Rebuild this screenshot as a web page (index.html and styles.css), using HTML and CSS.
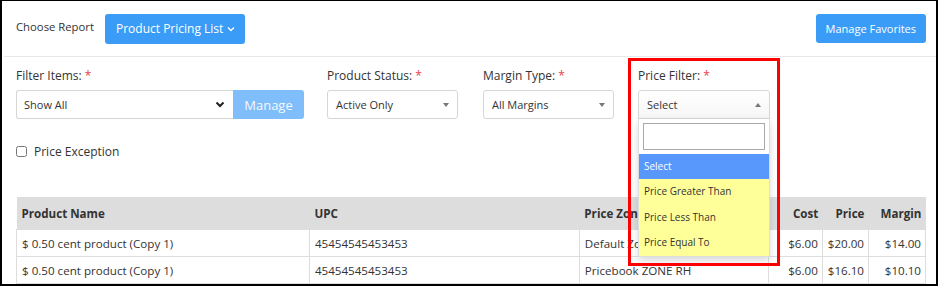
FILE: index.html
```html
<!DOCTYPE html>
<html lang="en">
<head>
    <meta charset="UTF-8">
    <title>Product Pricing List</title>
    <link rel="stylesheet" href="styles.css">
</head>
<body>

<div class="page">
    <div class="report-bar">
        <div class="report-left">
            <span class="choose-label">Choose Report</span>
            <button class="btn-blue report-btn">Product Pricing List
                <svg width="8" height="6" viewBox="0 0 8 6"><path d="M1 1.5 L4 4.5 L7 1.5" fill="none" stroke="#fff" stroke-width="1.3"/></svg>
            </button>
        </div>
        <button class="btn-blue fav-btn">Manage Favorites</button>
    </div>

    <div class="filters">
        <div class="filter filter-items">
            <label>Filter Items: <span class="req">*</span></label>
            <div class="input-group">
                <div class="native-select">
                    <span>Show All</span>
                    <svg width="10" height="7" viewBox="0 0 10 7"><path d="M1.5 1.5 L5 5 L8.5 1.5" fill="none" stroke="#222" stroke-width="2"/></svg>
                </div>
                <button class="manage-btn">Manage</button>
            </div>
        </div>
        <div class="filter filter-small">
            <label>Product Status: <span class="req">*</span></label>
            <div class="select2">
                <span>Active Only</span>
                <span class="caret-down"></span>
            </div>
        </div>
        <div class="filter filter-small margin-filter">
            <label>Margin Type: <span class="req">*</span></label>
            <div class="select2">
                <span>All Margins</span>
                <span class="caret-down"></span>
            </div>
        </div>
        <div class="filter filter-small price-filter">
            <label>Price Filter: <span class="req">*</span></label>
            <div class="select2 open">
                <span>Select</span>
                <span class="caret-up"></span>
            </div>
            <div class="dropdown">
                <div class="search-wrap"><input type="text" class="search-box"></div>
                <ul class="options">
                    <li class="active">Select</li>
                    <li>Price Greater Than</li>
                    <li>Price Less Than</li>
                    <li>Price Equal To</li>
                </ul>
            </div>
            <div class="highlight-box"></div>
        </div>
    </div>

    <div class="check-row">
        <label class="check-label"><input type="checkbox"> Price Exception</label>
    </div>

    <table class="price-table">
        <thead>
            <tr>
                <th class="col-name">Product Name</th>
                <th class="col-upc">UPC</th>
                <th class="col-zone">Price Zone</th>
                <th class="num col-cost">Cost</th>
                <th class="num col-price">Price</th>
                <th class="num col-margin">Margin</th>
            </tr>
        </thead>
        <tbody>
            <tr>
                <td>$ 0.50 cent product (Copy 1)</td>
                <td>45454545453453</td>
                <td>Default Zone</td>
                <td class="num">$6.00</td>
                <td class="num">$20.00</td>
                <td class="num">$14.00</td>
            </tr>
            <tr>
                <td>$ 0.50 cent product (Copy 1)</td>
                <td>45454545453453</td>
                <td>Pricebook ZONE RH</td>
                <td class="num">$6.00</td>
                <td class="num">$16.10</td>
                <td class="num">$10.10</td>
            </tr>
            <tr>
                <td>$ 0.50 cent product (Copy 2)</td>
                <td>45454545453453</td>
                <td>Default Zone</td>
                <td class="num">$6.00</td>
                <td class="num">$20.00</td>
                <td class="num">$14.00</td>
            </tr>
        </tbody>
    </table>
</div>

</body>
</html>
```

FILE: styles.css
```css
html, body {
    margin: 0;
    padding: 0;
}
body {
    font-family: "Open Sans", "Noto Sans", sans-serif;
    color: #333;
    background: #fff;
}
.page {
    box-sizing: border-box;
    width: 938px;
    height: 286px;
    overflow: hidden;
    border-top: 1px solid #000;
    border-left: 2px solid #000;
    border-right: 2px solid #000;
    border-bottom: 2px solid #000;
    position: relative;
}
.report-bar {
    display: flex;
    justify-content: space-between;
    align-items: center;
    height: 55px;
    padding: 0 10px 0 12px;
    border-bottom: 1px solid #e8e8e8;
    margin-left: 2px;
}
.report-left {
    display: flex;
    align-items: center;
    gap: 11px;
}
.choose-label {
    font-size: 11.3px;
    color: #333;
    margin-top: -5px;
}
.btn-blue {
    font-family: inherit;
    background-color: #3a9cf7;
    color: #fff;
    border: none;
    border-radius: 3px;
    cursor: pointer;
}
.report-btn {
    height: 30px;
    padding: 0 10px 0 11px;
    font-size: 12px;
    display: flex;
    align-items: center;
    gap: 4px;
}
.fav-btn {
    height: 29px;
    padding: 0 10px;
    font-size: 11px;
}
.filters {
    display: flex;
    padding: 10px 0 0 14px;
}
.filter label {
    display: block;
    font-size: 12px;
    line-height: 17px;
    margin-bottom: 6px;
    color: #333;
}
.req {
    color: #e8414a;
}
.filter-items {
    width: 288px;
    margin-right: 23px;
}
.filter-small {
    width: 131px;
    margin-right: 25px;
}
.margin-filter {
    margin-right: 24px;
}
.price-filter {
    width: 132px;
    position: relative;
}
.input-group {
    display: flex;
    height: 29px;
}
.native-select {
    box-sizing: border-box;
    flex: 1;
    display: flex;
    align-items: center;
    justify-content: space-between;
    padding: 0 8px 0 7px;
    border: 1px solid #d6d6d6;
    border-right: none;
    border-radius: 3px 0 0 3px;
    font-size: 11px;
    color: #333;
}
.manage-btn {
    width: 71px;
    font-family: inherit;
    font-size: 13px;
    background-color: #80bdfb;
    color: #f4f9ff;
    border: none;
    border-radius: 0 3px 3px 0;
}
.select2 {
    box-sizing: border-box;
    height: 29px;
    display: flex;
    align-items: center;
    justify-content: space-between;
    padding: 0 8px 0 8px;
    border: 1px solid #d6d6d6;
    border-radius: 3px;
    font-size: 11px;
    color: #333;
}
.select2.open {
    border-radius: 3px 3px 0 0;
    background: linear-gradient(#fff, #f6f6f6);
}
.caret-down, .caret-up {
    width: 0;
    height: 0;
    border-left: 3px solid transparent;
    border-right: 3px solid transparent;
}
.caret-down {
    border-top: 4px solid #777;
}
.caret-up {
    border-bottom: 4px solid #777;
}
.dropdown {
    position: absolute;
    top: 52px;
    left: 0;
    width: 132px;
    background: #fff;
    border: 1px solid #ddd;
    border-top: none;
    box-sizing: border-box;
    box-shadow: 0 4px 8px rgba(0, 0, 0, 0.15);
    z-index: 5;
}
.search-wrap {
    padding: 4px;
}
.search-box {
    box-sizing: border-box;
    width: 100%;
    height: 27px;
    border: 1px solid #aaa;
    margin: 0;
    display: block;
}
.options {
    list-style: none;
    margin: 0;
    padding: 0;
    font-size: 10px;
    color: #333;
}
.options li {
    height: 25.5px;
    line-height: 25.5px;
    padding: 0 5px;
    background-color: #ffff99;
}
.options li.active {
    height: 25px;
    line-height: 25px;
    background-color: #5897fb;
    color: #fff;
}
.highlight-box {
    position: absolute;
    top: -9px;
    left: -10px;
    width: 152px;
    height: 208px;
    box-sizing: border-box;
    border: 3px solid #ff0000;
    z-index: 6;
    pointer-events: none;
}
.check-row {
    padding: 24px 0 0 14px;
    height: 40px;
    box-sizing: border-box;
}
.check-label {
    display: flex;
    align-items: center;
    gap: 4px;
    font-size: 12px;
}
.check-label input {
    margin: 0 3px 0 0;
    width: 11px;
    height: 11px;
}
.price-table {
    margin: 38px 0 0 14px;
    width: 910px;
    border-collapse: collapse;
    font-size: 11.6px;
}
.price-table th {
    background-color: #dddddd;
    font-weight: bold;
    text-align: left;
    height: 32px;
    padding: 0 5px;
    color: #333;
}
.price-table td {
    height: 26px;
    padding: 0 5px;
    border: 1px solid #dddddd;
    color: #333;
}
.price-table .num {
    text-align: right;
    padding-right: 4px;
}
.col-name { width: 283px; }
.col-upc { width: 260px; }
.col-zone { width: 179px; }
.col-cost { width: 45px; }
.col-price { width: 37px; }
.col-margin { width: 48px; }
```
